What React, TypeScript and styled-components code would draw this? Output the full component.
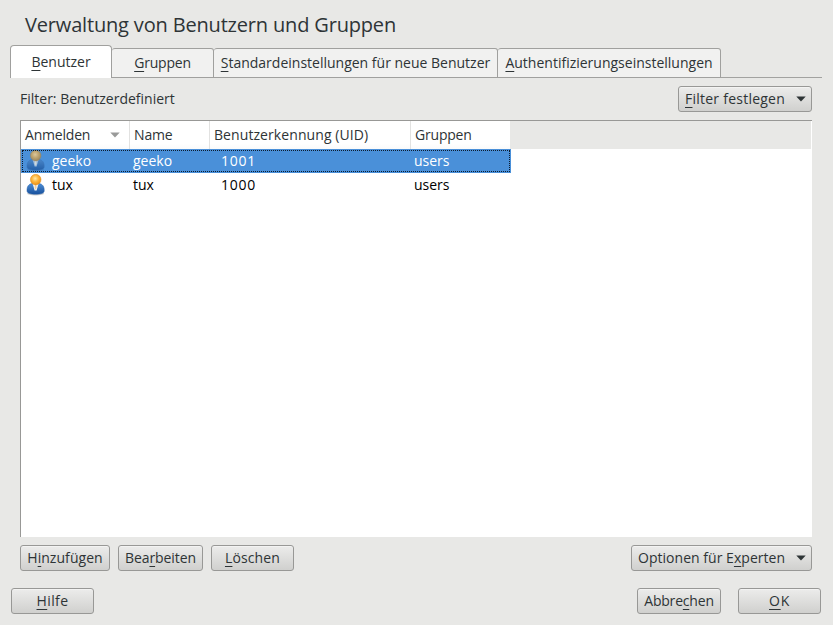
import React from "react";
import styled, { createGlobalStyle } from "styled-components";

const GlobalStyle = createGlobalStyle`
  * { box-sizing: border-box; }
  body {
    margin: 0;
    background: #e8e8e6;
    color: #2e3436;
    font: 14px/20px "Open Sans", "Noto Sans", sans-serif;
  }
`;

const Dialog = styled.main`
  display: flex;
  flex-direction: column;
  width: 833px;
  height: 625px;
  padding: 10px 11px 11px 10px;
`;

const Title = styled.h1`
  margin: 0 0 5px;
  padding-left: 15px;
  font-size: 20px;
  font-weight: 400;
  line-height: 30px;
  letter-spacing: -0.17px;
  white-space: nowrap;
`;

const Text = styled.span<{ $tracking?: number }>`
  white-space: nowrap;
  letter-spacing: ${({ $tracking }) => ($tracking ? `${$tracking}px` : "normal")};
`;

const Mnemonic = styled.span`
  text-decoration: underline 1px;
  text-underline-offset: 3px;
  text-decoration-skip-ink: none;
`;

const TabBar = styled.div`
  display: flex;
  align-items: flex-end;
  height: 33px;
  background: linear-gradient(#a2a2a0, #a2a2a0) 0 100% / 100% 1px no-repeat;
`;

const Tab = styled.button<{ $width: number; $active?: boolean }>`
  display: flex;
  justify-content: center;
  align-items: center;
  width: ${({ $width }) => $width}px;
  height: ${({ $active }) => ($active ? 33 : 30)}px;
  margin: 0;
  padding: 0;
  border: 1px solid #a0a09e;
  border-left-width: ${({ $active }) => ($active ? 1 : 0)}px;
  border-bottom-width: ${({ $active }) => ($active ? 0 : 1)}px;
  border-radius: ${({ $active }) => ($active ? "4px 4px 0 0" : "3px 3px 0 0")};
  background: ${({ $active }) => ($active ? "#fff" : "#f1f1f0")};
  color: inherit;
  font: inherit;
`;

const Panel = styled.section`
  display: flex;
  flex: 1;
  flex-direction: column;
  padding: 8px 10px 0;
`;

const Bar = styled.div`
  display: flex;
  align-items: center;
  gap: 8px;
`;

const Spacer = styled.span`
  flex: 1;
`;

const Button = styled.button<{ $width: number; $menu?: boolean }>`
  display: flex;
  align-items: center;
  justify-content: ${({ $menu }) => ($menu ? "space-between" : "center")};
  width: ${({ $width }) => $width}px;
  height: 26px;
  margin: 0;
  padding: ${({ $menu }) => ($menu ? "0 5px 0 6px" : "0")};
  border: 1px solid #989896;
  border-radius: 3px;
  background: linear-gradient(#ececeb, #d0d0ce);
  box-shadow: inset 0 1px #f3f3f2;
  color: inherit;
  font: inherit;
`;

const Table = styled.div`
  height: 417px;
  margin: 8px 0;
  border: solid #989896;
  border-width: 1px 0 0 1px;
  background: #fff;
`;

const columns = "109px 80px 201px";

const HeaderRow = styled.div`
  display: grid;
  grid-template-columns: ${columns} 99px 1fr;
  height: 28px;
  margin-right: 1px;
`;

const HeaderCell = styled.div`
  display: flex;
  align-items: center;
  justify-content: space-between;
  padding: 0 9px 0 4px;
  border-right: 1px solid #e2e2e1;
  background: linear-gradient(#fff 80%, #fafafa);

  &:nth-child(4) {
    border-right: 0;
  }
`;

const HeaderFill = styled.div`
  background: #e8e8e6;
`;

const Row = styled.div<{ $selected?: boolean }>`
  display: grid;
  grid-template-columns: ${columns} 100px;
  align-items: center;
  width: 490px;
  height: 24px;
  background: ${({ $selected }) => ($selected ? "#4a90d9" : "transparent")};
  color: ${({ $selected }) => ($selected ? "#fff" : "#000")};
  outline: ${({ $selected }) => ($selected ? "1px dotted #0c1c2e" : "none")};
  outline-offset: -2px;
`;

const Cell = styled.div<{ $indent: number }>`
  display: flex;
  align-items: center;
  gap: 6px;
  padding-left: ${({ $indent }) => $indent}px;
`;

const Footer = styled.footer`
  display: flex;
  align-items: center;
  padding: 0 1px;
`;

const CancelButton = styled(Button)`
  margin-right: 17px;
`;

function Arrow({ muted = false }: { muted?: boolean }) {
  return (
    <svg width="10" height="6" viewBox="0 0 10 6">
      <path d="M0.3 0.5h9.4L5 5.6z" fill={muted ? "#999a99" : "#2e3436"} />
    </svg>
  );
}

function UserIcon({ id, dim = false }: { id: string; dim?: boolean }) {
  return (
    <svg width="20" height="22" viewBox="0 0 20 22">
      <defs>
        <radialGradient id={`${id}-head`} cx="0.45" cy="0.4" r="0.6">
          <stop offset="0" stopColor={dim ? "#dcc89c" : "#ffe9a8"} />
          <stop offset="0.5" stopColor={dim ? "#bfa672" : "#fdb73f"} />
          <stop offset="1" stopColor={dim ? "#9c875c" : "#ec9016"} />
        </radialGradient>
        <linearGradient id={`${id}-body`} x1="0" y1="0" x2="0" y2="1">
          <stop offset="0" stopColor={dim ? "#4a86c8" : "#4f8fd6"} />
          <stop offset="1" stopColor={dim ? "#235fa8" : "#17509c"} />
        </linearGradient>
      </defs>
      <ellipse cx="9.6" cy="19.6" rx="8.5" ry="1.8" fill="#000" opacity={dim ? 0.08 : 0.2} />
      <path
        d="M1 17C.8 12.500 2.600 10 6.200 9.500h6.800c3.600.5 5.400 3 5.200 7.500-.2 2.200-3.400 3.200-8.600 3.200S1.200 19.200 1 17z"
        fill={`url(#${id}-body)`}
        stroke={dim ? "#3873b6" : "#2460aa"}
        strokeWidth="0.5"
      />
      <path d="M6.600 9.500h6L10.600 16.500h-2z" fill={dim ? "#9cbbdc" : "#f4f7fb"} />
      <path d="M9 10h1.200l.4 3.800-1 2-1-2z" fill={dim ? "#cdd8dd" : "#f3cf9c"} />
      <circle cx="9.700" cy="5.600" r="5.300" fill={`url(#${id}-head)`} stroke={dim ? "#978663" : "#d88a20"} strokeWidth="0.5" />
    </svg>
  );
}

const users = [
  { login: "geeko", name: "geeko", uid: "1001", groups: "users", selected: true },
  { login: "tux", name: "tux", uid: "1000", groups: "users", selected: false },
];

export default function App() {
  return (
    <>
      <GlobalStyle />
      <Dialog>
        <Title>Verwaltung von Benutzern und Gruppen</Title>
        <TabBar>
          <Tab $width={102} $active>
            <Text><Mnemonic>B</Mnemonic>enutzer</Text>
          </Tab>
          <Tab $width={102}>
            <Text $tracking={-0.2}><Mnemonic>G</Mnemonic>ruppen</Text>
          </Tab>
          <Tab $width={284}>
            <Text><Mnemonic>S</Mnemonic>tandardeinstellungen für neue Benutzer</Text>
          </Tab>
          <Tab $width={223}>
            <Text><Mnemonic>A</Mnemonic>uthentifizierungseinstellungen</Text>
          </Tab>
        </TabBar>
        <Panel>
          <Bar>
            <Text>Filter: Benutzerdefiniert</Text>
            <Spacer />
            <Button $width={134} $menu>
              <Text $tracking={0.24}><Mnemonic>F</Mnemonic>ilter festlegen</Text>
              <Arrow />
            </Button>
          </Bar>
          <Table>
            <HeaderRow>
              <HeaderCell>
                <Text $tracking={-0.2}>Anmelden</Text>
                <Arrow muted />
              </HeaderCell>
              <HeaderCell><Text $tracking={-0.15}>Name</Text></HeaderCell>
              <HeaderCell><Text $tracking={0.08}>Benutzerkennung (UID)</Text></HeaderCell>
              <HeaderCell><Text $tracking={-0.2}>Gruppen</Text></HeaderCell>
              <HeaderFill />
            </HeaderRow>
            {users.map((user) => (
              <Row key={user.login} $selected={user.selected}>
                <Cell $indent={5}>
                  <UserIcon id={user.login} dim={user.selected} />
                  <Text>{user.login}</Text>
                </Cell>
                <Cell $indent={3}><Text>{user.name}</Text></Cell>
                <Cell $indent={11}><Text $tracking={0.75}>{user.uid}</Text></Cell>
                <Cell $indent={3}><Text>{user.groups}</Text></Cell>
              </Row>
            ))}
          </Table>
          <Bar>
            <Button $width={90}>
              <Text $tracking={0.05}>H<Mnemonic>i</Mnemonic>nzufügen</Text>
            </Button>
            <Button $width={85}>
              <Text $tracking={-0.08}>Bea<Mnemonic>r</Mnemonic>beiten</Text>
            </Button>
            <Button $width={83}>
              <Text $tracking={0.13}><Mnemonic>L</Mnemonic>öschen</Text>
            </Button>
            <Spacer />
            <Button $width={181} $menu>
              <Text $tracking={0.03}>Optionen für E<Mnemonic>x</Mnemonic>perten</Text>
              <Arrow />
            </Button>
          </Bar>
        </Panel>
        <Footer>
          <Button $width={83}>
            <Text $tracking={0.4}><Mnemonic>H</Mnemonic>ilfe</Text>
          </Button>
          <Spacer />
          <CancelButton $width={84}>
            <Text $tracking={-0.2}>Abbre<Mnemonic>c</Mnemonic>hen</Text>
          </CancelButton>
          <Button $width={83}>
            <Text $tracking={0.75}><Mnemonic>O</Mnemonic>K</Text>
          </Button>
        </Footer>
      </Dialog>
    </>
  );
}
